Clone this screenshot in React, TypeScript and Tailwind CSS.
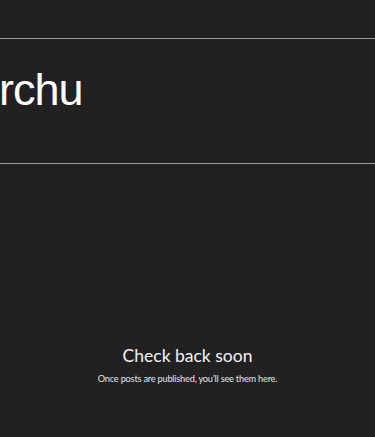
export default function App() {
  return (
    <div className="w-[375px] h-[437px] bg-[#212121] overflow-hidden flex flex-col" style={{ fontFamily: "Lato, 'Liberation Sans', sans-serif" }}>
      {/* top bar */}
      <div className="h-[39px] shrink-0 border-b border-[#9a9a9a]" />

      {/* title strip, the word is scrolled off the left edge */}
      <div className="h-[125px] shrink-0 border-b border-[#9a9a9a] overflow-hidden flex items-start pt-[28px]">
        <span
          className="text-white text-[45px] leading-none tracking-[-1px] whitespace-nowrap -ml-[1px]"
          style={{ fontFamily: "'Liberation Sans', Arial, sans-serif" }}
        >
          rchu
        </span>
      </div>

      {/* empty state */}
      <div className="flex-1 flex flex-col items-center pt-[181px]">
        <h2 className="text-[#f2f2f2] text-[17.5px] leading-[22px] font-normal">Check back soon</h2>
        <p className="text-[#e6e6e6] text-[9.2px] leading-[12px] tracking-[-0.2px] mt-[6px]">
          Once posts are published, you’ll see them here.
        </p>
      </div>
    </div>
  );
}
